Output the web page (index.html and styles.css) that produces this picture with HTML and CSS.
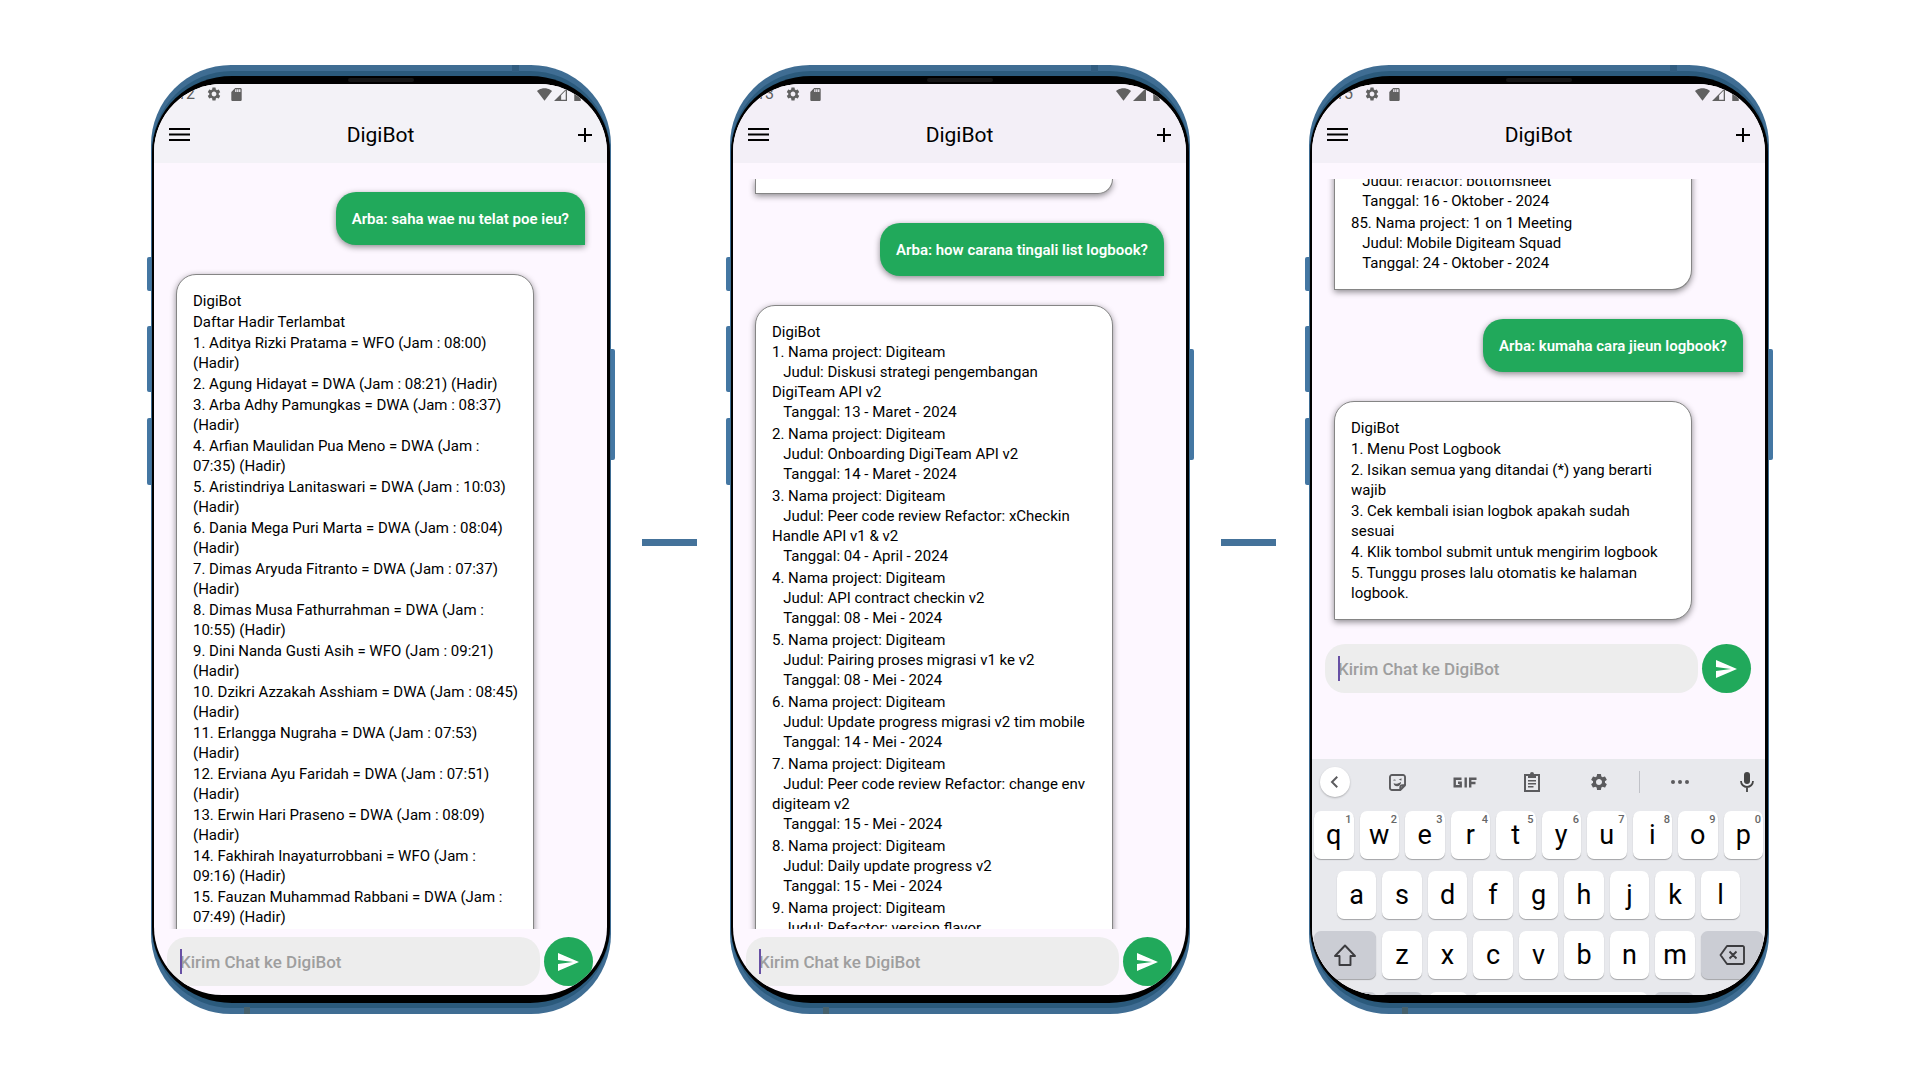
FILE: index.html
```html
<!DOCTYPE html>
<html lang="id">
<head>
<meta charset="utf-8">
<title>DigiBot</title>
<meta name="viewport" content="width=device-width, initial-scale=1">
<link rel="stylesheet" href="styles.css">
</head>
<body>
<svg class="sprite" aria-hidden="true">
  <symbol id="gear" viewBox="0 0 24 24"><path d="M19.14 12.94c.04-.3.06-.61.06-.94 0-.32-.02-.64-.07-.94l2.03-1.58a.49.49 0 0 0 .12-.61l-1.92-3.32a.488.488 0 0 0-.59-.22l-2.39.96c-.5-.38-1.03-.7-1.62-.94l-.36-2.54a.484.484 0 0 0-.48-.41h-3.84c-.24 0-.43.17-.47.41l-.36 2.54c-.59.24-1.13.57-1.62.94l-2.39-.96c-.22-.08-.47 0-.59.22L2.74 8.87c-.12.21-.08.47.12.61l2.03 1.58c-.05.3-.09.63-.09.94s.02.64.07.94l-2.03 1.58a.49.49 0 0 0-.12.61l1.92 3.32c.12.22.37.29.59.22l2.39-.96c.5.38 1.03.7 1.62.94l.36 2.54c.05.24.24.41.48.41h3.84c.24 0 .44-.17.47-.41l.36-2.54c.59-.24 1.13-.56 1.62-.94l2.39.96c.22.08.47 0 .59-.22l1.92-3.32c.12-.22.07-.47-.12-.61l-2.01-1.58zM12 15.6A3.61 3.61 0 0 1 8.4 12c0-1.98 1.62-3.6 3.6-3.6s3.6 1.62 3.6 3.6-1.62 3.6-3.6 3.6z"/></symbol>
  <symbol id="sd" viewBox="0 0 16 20"><path d="M14 0H6L0 6v12c0 1.100.9 2 2 2h12c1.100 0 2-.9 2-2V2c0-1.100-.9-2-2-2zM8 6H6V2h2v4zm3 0H9V2h2v4zm3 0h-2V2h2v4z"/></symbol>
  <symbol id="wifi" viewBox="0 0 24 20"><path d="M12 20 24 4.500C23.500 4 19 0 12 0S.5 4 0 4.500z"/></symbol>
  <symbol id="signal-full" viewBox="0 0 20 20"><path d="M0 20h20V0z"/></symbol>
  <symbol id="signal-low" viewBox="0 0 20 20"><path fill-rule="evenodd" d="M0 20h20V0zM11 18v-7l7-7v14z"/></symbol>
  <symbol id="battery" viewBox="0 0 10 20"><path d="M0 3h3V0h4v3h3v17H0z"/></symbol>
  <symbol id="menu" viewBox="0 0 22 14"><path d="M0 0h21v2H0zM0 5.500h21v2H0zM0 11h21v2H0z"/></symbol>
  <symbol id="plus" viewBox="0 0 14 14"><path d="M6 0h2v6h6v2H8v6H6V8H0V6h6z"/></symbol>
  <symbol id="send" viewBox="0 0 21 18"><path d="M0 18 21 9 0 0v7l15 2-15 2z"/></symbol>
  <symbol id="back" viewBox="0 0 24 24"><path fill="none" stroke="currentColor" stroke-width="2.600" d="m15 5-7 7 7 7"/></symbol>
  <symbol id="sticker" viewBox="0 0 24 24"><path fill="none" stroke="currentColor" stroke-width="2.400" stroke-linejoin="round" d="M5 2.500h14A2.500 2.500 0 0 1 21.500 5v10.500l-6 6H5A2.500 2.500 0 0 1 2.500 19V5A2.500 2.500 0 0 1 5 2.500zM15.500 21.500v-3a3 3 0 0 1 3-3h3"/><path d="M6.500 9.500a1.800 1.800 0 0 1 3.500 0zM13.500 8.500l3.500-2v3zM7 13c3 1.200 6 .5 9.500-2-.2 3.500-2.200 5.800-5 5.800C9 16.800 7.500 15.300 7 13z"/></symbol>
  <symbol id="gif" viewBox="0 0 24 11"><path fill="none" stroke="currentColor" stroke-width="2.400" d="M8.500 1.700H1.700v7.600h6V5.800H5M12.700.5v10M23.500 1.700h-6.300v8.800M17.200 6h5.300"/></symbol>
  <symbol id="clipboard" viewBox="0 0 16 20"><path fill="none" stroke="currentColor" stroke-width="2" d="M1 3h14v16H1z"/><path d="M4 2h2a2 2 0 0 1 4 0h2v4H4zM4 8h8v1.600H4zM4 11h8v1.600H4zM4 14h5.500v1.600H4z"/></symbol>
  <symbol id="more" viewBox="0 0 18 4"><circle cx="2" cy="2" r="2"/><circle cx="9" cy="2" r="2"/><circle cx="16" cy="2" r="2"/></symbol>
  <symbol id="mic" viewBox="0 0 14 20"><rect x="4" width="6" height="12" rx="3"/><path fill="none" stroke="currentColor" stroke-width="1.800" d="M1 9a6 6 0 0 0 12 0M7 15v5"/></symbol>
  <symbol id="shift" viewBox="0 0 24 22"><path fill="none" stroke="currentColor" stroke-width="1.900" stroke-linejoin="round" d="M12 1.500 22 12h-4.500v9h-11v-9H2z"/></symbol>
  <symbol id="delete" viewBox="0 0 26 20"><path fill="none" stroke="currentColor" stroke-width="1.900" stroke-linejoin="round" d="M8 1h15.500A1.500 1.500 0 0 1 25 2.500v15a1.500 1.500 0 0 1-1.500 1.500H8l-6.500-9zM10.500 6.500l7 7M17.500 6.500l-7 7"/></symbol>
</svg>

<main class="stage">

  <section class="phone" aria-label="Daftar hadir">
    <i class="side side--mute"></i><i class="side side--up"></i><i class="side side--down"></i><i class="side side--power"></i>
    <i class="antenna antenna--top"></i><i class="antenna antenna--bottom"></i>
    <div class="frame"><div class="bezel"><i class="speaker"></i>
      <div class="screen">
        <header class="top top--cool">
          <div class="status">
            <span class="clock">12</span>
            <svg class="ic-gear"><use href="#gear"/></svg>
            <svg class="ic-sd"><use href="#sd"/></svg>
            <svg class="ic-wifi"><use href="#wifi"/></svg>
            <svg class="ic-signal"><use href="#signal-low"/></svg>
            <svg class="ic-battery"><use href="#battery"/></svg>
          </div>
          <div class="appbar">
            <button type="button" class="icon-btn" aria-label="Menu"><svg class="ic-menu"><use href="#menu"/></svg></button>
            <h1>DigiBot</h1>
            <button type="button" class="icon-btn icon-btn--end" aria-label="Chat baru"><svg class="ic-plus"><use href="#plus"/></svg></button>
          </div>
        </header>
        <div class="chat chat--start">
          <p class="mine">Arba: saha wae nu telat poe ieu?</p>
          <article class="bot bot--roomy bot--continues">
            <p>DigiBot</p>
            <p>Daftar Hadir Terlambat</p>
            <p>1. Aditya Rizki Pratama = WFO (Jam : 08:00) (Hadir)</p>
            <p>2. Agung Hidayat = DWA (Jam : 08:21) (Hadir)</p>
            <p>3. Arba Adhy Pamungkas = DWA (Jam : 08:37) (Hadir)</p>
            <p>4. Arfian Maulidan Pua Meno = DWA (Jam : 07:35) (Hadir)</p>
            <p>5. Aristindriya Lanitaswari = DWA (Jam : 10:03) (Hadir)</p>
            <p>6. Dania Mega Puri Marta = DWA (Jam : 08:04) (Hadir)</p>
            <p>7. Dimas Aryuda Fitranto = DWA (Jam : 07:37) (Hadir)</p>
            <p>8. Dimas Musa Fathurrahman = DWA (Jam : 10:55) (Hadir)</p>
            <p>9. Dini Nanda Gusti Asih = WFO (Jam : 09:21) (Hadir)</p>
            <p>10. Dzikri Azzakah Asshiam = DWA (Jam : 08:45) (Hadir)</p>
            <p>11. Erlangga Nugraha = DWA (Jam : 07:53) (Hadir)</p>
            <p>12. Erviana Ayu Faridah = DWA (Jam : 07:51) (Hadir)</p>
            <p>13. Erwin Hari Praseno = DWA (Jam : 08:09) (Hadir)</p>
            <p>14. Fakhirah Inayaturrobbani = WFO (Jam : 09:16) (Hadir)</p>
            <p>15. Fauzan Muhammad Rabbani = DWA (Jam : 07:49) (Hadir)</p>
          </article>
        </div>
        <form class="composer">
          <div class="field"><i class="caret"></i><input type="text" aria-label="Kirim Chat ke DigiBot" placeholder="Kirim Chat ke DigiBot"></div>
          <button type="button" class="send" aria-label="Kirim"><svg class="ic-send"><use href="#send"/></svg></button>
        </form>
      </div>
    </div></div>
  </section>

  <div class="link"></div>

  <section class="phone" aria-label="List logbook">
    <i class="side side--mute"></i><i class="side side--up"></i><i class="side side--down"></i><i class="side side--power"></i>
    <i class="antenna antenna--top"></i><i class="antenna antenna--bottom"></i>
    <div class="frame"><div class="bezel"><i class="speaker"></i>
      <div class="screen">
        <header class="top">
          <div class="status">
            <span class="clock">13</span>
            <svg class="ic-gear"><use href="#gear"/></svg>
            <svg class="ic-sd"><use href="#sd"/></svg>
            <svg class="ic-wifi"><use href="#wifi"/></svg>
            <svg class="ic-signal"><use href="#signal-full"/></svg>
            <svg class="ic-battery"><use href="#battery"/></svg>
          </div>
          <div class="appbar">
            <button type="button" class="icon-btn" aria-label="Menu"><svg class="ic-menu"><use href="#menu"/></svg></button>
            <h1>DigiBot</h1>
            <button type="button" class="icon-btn icon-btn--end" aria-label="Chat baru"><svg class="ic-plus"><use href="#plus"/></svg></button>
          </div>
        </header>
        <div class="chat">
          <article class="bot bot--tail bot--stub"></article>
          <p class="mine">Arba: how carana tingali list logbook?</p>
          <article class="bot bot--log bot--continues">
            <p>DigiBot
1. Nama project: Digiteam
   Judul: Diskusi strategi pengembangan DigiTeam API v2
   Tanggal: 13 - Maret - 2024</p>
            <p>2. Nama project: Digiteam
   Judul: Onboarding DigiTeam API v2
   Tanggal: 14 - Maret - 2024</p>
            <p>3. Nama project: Digiteam
   Judul: Peer code review Refactor: xCheckin Handle API v1 &amp; v2
   Tanggal: 04 - April - 2024</p>
            <p>4. Nama project: Digiteam
   Judul: API contract checkin v2
   Tanggal: 08 - Mei - 2024</p>
            <p>5. Nama project: Digiteam
   Judul: Pairing proses migrasi v1 ke v2
   Tanggal: 08 - Mei - 2024</p>
            <p>6. Nama project: Digiteam
   Judul: Update progress migrasi v2 tim mobile
   Tanggal: 14 - Mei - 2024</p>
            <p>7. Nama project: Digiteam
   Judul: Peer code review Refactor: change env digiteam v2
   Tanggal: 15 - Mei - 2024</p>
            <p>8. Nama project: Digiteam
   Judul: Daily update progress v2
   Tanggal: 15 - Mei - 2024</p>
            <p>9. Nama project: Digiteam
   Judul: Refactor: version flavor</p>
          </article>
        </div>
        <form class="composer">
          <div class="field"><i class="caret"></i><input type="text" aria-label="Kirim Chat ke DigiBot" placeholder="Kirim Chat ke DigiBot"></div>
          <button type="button" class="send" aria-label="Kirim"><svg class="ic-send"><use href="#send"/></svg></button>
        </form>
      </div>
    </div></div>
  </section>

  <div class="link"></div>

  <section class="phone" aria-label="Cara membuat logbook">
    <i class="side side--mute"></i><i class="side side--up"></i><i class="side side--down"></i><i class="side side--power"></i>
    <i class="antenna antenna--top"></i><i class="antenna antenna--bottom"></i>
    <div class="frame"><div class="bezel"><i class="speaker"></i>
      <div class="screen">
        <header class="top">
          <div class="status">
            <span class="clock">15</span>
            <svg class="ic-gear"><use href="#gear"/></svg>
            <svg class="ic-sd"><use href="#sd"/></svg>
            <svg class="ic-wifi"><use href="#wifi"/></svg>
            <svg class="ic-signal"><use href="#signal-low"/></svg>
            <svg class="ic-battery"><use href="#battery"/></svg>
          </div>
          <div class="appbar">
            <button type="button" class="icon-btn" aria-label="Menu"><svg class="ic-menu"><use href="#menu"/></svg></button>
            <h1>DigiBot</h1>
            <button type="button" class="icon-btn icon-btn--end" aria-label="Chat baru"><svg class="ic-plus"><use href="#plus"/></svg></button>
          </div>
        </header>
        <div class="chat chat--end">
          <article class="bot bot--log bot--tail">
            <p>   Judul: refactor: bottomsheet
   Tanggal: 16 - Oktober - 2024</p>
            <p>85. Nama project: 1 on 1 Meeting
   Judul: Mobile Digiteam Squad
   Tanggal: 24 - Oktober - 2024</p>
          </article>
          <p class="mine">Arba: kumaha cara jieun logbook?</p>
          <article class="bot">
            <p>DigiBot</p>
            <p>1. Menu Post Logbook</p>
            <p>2. Isikan semua yang ditandai (*) yang berarti wajib</p>
            <p>3. Cek kembali isian logbok apakah sudah sesuai</p>
            <p>4. Klik tombol submit untuk mengirim logbook</p>
            <p>5. Tunggu proses lalu otomatis ke halaman logbook.</p>
          </article>
        </div>
        <form class="composer composer--raised">
          <div class="field"><i class="caret"></i><input type="text" aria-label="Kirim Chat ke DigiBot" placeholder="Kirim Chat ke DigiBot"></div>
          <button type="button" class="send" aria-label="Kirim"><svg class="ic-send"><use href="#send"/></svg></button>
        </form>
        <div class="keyboard">
          <div class="tools">
            <button type="button" class="tool tool--back" aria-label="Kembali"><svg class="ic-back"><use href="#back"/></svg></button>
            <button type="button" class="tool" aria-label="Stiker"><svg class="ic-sticker"><use href="#sticker"/></svg></button>
            <button type="button" class="tool" aria-label="GIF"><svg class="ic-gif"><use href="#gif"/></svg></button>
            <button type="button" class="tool" aria-label="Papan klip"><svg class="ic-clip"><use href="#clipboard"/></svg></button>
            <button type="button" class="tool" aria-label="Setelan"><svg class="ic-tool-gear"><use href="#gear"/></svg></button>
            <i class="divider"></i>
            <button type="button" class="tool tool--more" aria-label="Lainnya"><svg class="ic-more"><use href="#more"/></svg></button>
            <button type="button" class="tool tool--mic" aria-label="Suara"><svg class="ic-mic"><use href="#mic"/></svg></button>
          </div>
          <div class="keys">
            <button type="button" class="key">q<sup>1</sup></button><button type="button" class="key">w<sup>2</sup></button><button type="button" class="key">e<sup>3</sup></button><button type="button" class="key">r<sup>4</sup></button><button type="button" class="key">t<sup>5</sup></button><button type="button" class="key">y<sup>6</sup></button><button type="button" class="key">u<sup>7</sup></button><button type="button" class="key">i<sup>8</sup></button><button type="button" class="key">o<sup>9</sup></button><button type="button" class="key">p<sup>0</sup></button>
          </div>
          <div class="keys">
            <button type="button" class="key">a</button><button type="button" class="key">s</button><button type="button" class="key">d</button><button type="button" class="key">f</button><button type="button" class="key">g</button><button type="button" class="key">h</button><button type="button" class="key">j</button><button type="button" class="key">k</button><button type="button" class="key">l</button>
          </div>
          <div class="keys">
            <button type="button" class="key key--wide" aria-label="Shift"><svg class="ic-shift"><use href="#shift"/></svg></button><button type="button" class="key">z</button><button type="button" class="key">x</button><button type="button" class="key">c</button><button type="button" class="key">v</button><button type="button" class="key">b</button><button type="button" class="key">n</button><button type="button" class="key">m</button><button type="button" class="key key--wide" aria-label="Hapus"><svg class="ic-delete"><use href="#delete"/></svg></button>
          </div>
          <div class="keys keys--cut">
            <button type="button" class="key key--wide" aria-label="Simbol"></button><button type="button" class="key key--grey" aria-label="Koma"></button><button type="button" class="key" aria-label="Emoji"></button><button type="button" class="key key--space" aria-label="Spasi"></button><button type="button" class="key key--grey" aria-label="Titik"></button><button type="button" class="key key--wide key--enter" aria-label="Enter"></button>
          </div>
        </div>
      </div>
    </div></div>
  </section>

</main>
</body>
</html>
```
FILE: styles.css
```css
* { box-sizing: border-box; }

body {
  margin: 0;
  background: #fff;
  color: #000;
  font-family: Roboto, "Liberation Sans", sans-serif;
  font-size: 15px;
  line-height: 20px;
}

p, h1 { margin: 0; }
button, input { border: 0; padding: 0; font: inherit; color: inherit; background: none; }
svg { display: block; fill: currentColor; }
.sprite { display: none; }

.stage {
  display: flex;
  align-items: center;
  padding: 65px 151px;
}

/* dash that joins two phones */
.link {
  flex: none;
  width: 55px;
  height: 7px;
  margin: 5px 33px 0 31px;
  background: #44729a;
}

/* phone body */
.phone {
  position: relative;
  flex: 1 1 0;
  min-width: 0;
  display: flex;
  aspect-ratio: 460 / 949;
  padding: 6px 1px;
  border-radius: 80px;
  background: #3f6d93;
}
.frame {
  flex: 1;
  min-width: 0;
  display: flex;
  padding: 5px 0;
  border-radius: 80px;
  background: #2b5a7c;
}
.bezel {
  position: relative;
  flex: 1;
  min-width: 0;
  display: flex;
  padding: 8px 3px 8px 2px;
  border-radius: 80px / 76px;
  background: #000;
}
.screen {
  flex: 1;
  min-width: 0;
  display: flex;
  flex-direction: column;
  overflow: hidden;
  border-radius: 68px;
  background: #fdf7ff;
}
.speaker {
  position: absolute;
  top: 2px;
  left: calc(50% - 33px);
  width: 66px;
  height: 4px;
  border-radius: 2px;
  background: #161616;
}
.side {
  position: absolute;
  left: -4px;
  width: 4px;
  border-radius: 2px 0 0 2px;
  background: #4477a3;
}
.side--mute { top: 20.200%; height: 34px; }
.side--up { top: 27.500%; height: 66px; }
.side--down { top: 37.200%; height: 67px; }
.side--power { top: 29.900%; left: auto; right: -4px; height: 111px; border-radius: 0 2px 2px 0; }
.antenna { position: absolute; height: 7px; }
.antenna--top { top: 0; right: 92px; width: 7px; background: #315d80; }
.antenna--bottom { bottom: 0; left: 93px; width: 6px; background: #47616c; }

/* status and app bar */
.top { flex: none; height: 79px; background: #f3eff7; }
.top--cool { background: #f3f2f7; }
.status {
  display: flex;
  align-items: center;
  height: 20px;
  padding-left: 23px;
  color: #616161;
}
.clock { width: 29px; font-size: 16px; }
.ic-gear { width: 16px; height: 16px; margin-right: 9px; }
.ic-sd { width: 11px; height: 13px; }
.ic-wifi { width: 15px; height: 13px; margin-left: auto; margin-right: 2px; }
.ic-signal { width: 13px; height: 13px; margin-right: 6px; }
.ic-battery { width: 9px; height: 13px; margin-right: 25px; }
.appbar {
  display: flex;
  align-items: center;
  justify-content: space-between;
  height: 61px;
  padding: 0 15px;
}
.appbar h1 { font-size: 21px; font-weight: 400; line-height: 24px; }
.icon-btn { width: 22px; height: 24px; display: flex; align-items: center; }
.icon-btn--end { justify-content: flex-end; }
.ic-menu { width: 22px; height: 14px; }
.ic-plus { width: 14px; height: 14px; }

/* conversation */
.chat {
  flex: 1 1 0;
  min-height: 0;
  display: flex;
  flex-direction: column;
  gap: 29px;
  margin-top: 16px;
  padding: 0 22px;
  overflow: hidden;
}
.chat--start { padding-top: 13px; }
.chat--end { justify-content: flex-end; padding-bottom: 16px; }
.mine {
  flex: none;
  align-self: flex-end;
  padding: 17px 16px 16px;
  border-radius: 20px 20px 0 20px;
  background: #21a95b;
  box-shadow: 0 2px 6px rgba(0, 0, 0, .45);
  color: #fff;
  font-weight: 600;
}
.bot {
  flex: none;
  display: flex;
  flex-direction: column;
  gap: 1px;
  width: 358px;
  max-width: 100%;
  padding: 16px;
  border: 1px solid #858585;
  border-radius: 20px 20px 20px 0;
  background: #fff;
  box-shadow: 0 2px 6px rgba(0, 0, 0, .45);
  white-space: pre-wrap;
}
.bot--roomy { padding-right: 12px; }
.bot--log { gap: 2px; }
.bot--tail { border-top: 0; border-radius: 0 0 20px 0; padding-top: 0; }
.bot--stub { height: 15px; padding: 0; }
.bot--continues { padding-bottom: 60px; }

/* message composer */
.composer {
  flex: none;
  display: flex;
  gap: 4px;
  padding: 8px 14px 9px 13px;
}
.composer--raised { padding-bottom: 66px; }
.field { position: relative; flex: 1; min-width: 0; display: flex; }
.field input {
  width: 100%;
  height: 49px;
  padding: 0 13px;
  border-radius: 20px;
  background: #ededed;
  font-size: 17px;
  font-weight: 500;
}
.field input::placeholder { color: #9e9e9e; opacity: 1; }
.caret { position: absolute; top: 12px; left: 13px; width: 2px; height: 25px; background: #6750a4; }
.send {
  flex: none;
  width: 49px;
  height: 49px;
  display: flex;
  align-items: center;
  justify-content: center;
  border-radius: 50%;
  background: #21a95b;
  color: #fff;
}
.ic-send { width: 21px; height: 18px; }

/* on-screen keyboard */
.keyboard { flex: none; height: 236px; overflow: hidden; background: #e8e9ed; }
.tools {
  display: flex;
  align-items: center;
  height: 52px;
  padding: 0 8px 6px 8px;
  color: #5b5b5e;
}
.tool { flex: 1; display: flex; align-items: center; justify-content: center; }
.tool--back {
  flex: none;
  width: 30px;
  height: 30px;
  margin-right: 14px;
  border-radius: 50%;
  background: #fff;
  box-shadow: 0 1px 2px rgba(0, 0, 0, .25);
}
.tool--more { flex: none; width: 80px; }
.tool--mic { flex: none; width: 14px; margin-left: 20px; margin-right: 3px; color: #444; }
.divider { width: 1px; height: 22px; margin-left: 6px; background: #c0c2c8; }
.ic-back { width: 18px; height: 18px; }
.ic-sticker { width: 19px; height: 19px; }
.ic-gif { width: 24px; height: 11px; }
.ic-clip { width: 16px; height: 20px; }
.ic-tool-gear { width: 20px; height: 20px; }
.ic-more { width: 18px; height: 4px; }
.ic-mic { width: 14px; height: 20px; }
.keys {
  display: flex;
  justify-content: center;
  gap: 6px;
  height: 48px;
  margin: 0 2px 12px;
}
.keys--cut { margin-top: 13px; }
.key {
  position: relative;
  flex: none;
  width: calc((100% - 54px) / 10);
  height: 48px;
  display: flex;
  align-items: center;
  justify-content: center;
  border-radius: 7px;
  background: #fff;
  box-shadow: 0 1px 1px rgba(0, 0, 0, .3);
  font-size: 27px;
  line-height: 32px;
}
.key sup {
  position: absolute;
  top: 3px;
  right: 2px;
  color: #666;
  font-size: 11px;
  font-weight: 500;
  line-height: 12px;
}
.key--wide { flex: 1; background: #cbcdd4; color: #3c3c3f; }
.key--grey { background: #cbcdd4; }
.key--space { width: 174px; }
.key--enter { border-radius: 24px; background: #1a6be0; }
.ic-shift { width: 24px; height: 22px; }
.ic-delete { width: 26px; height: 20px; }
```
